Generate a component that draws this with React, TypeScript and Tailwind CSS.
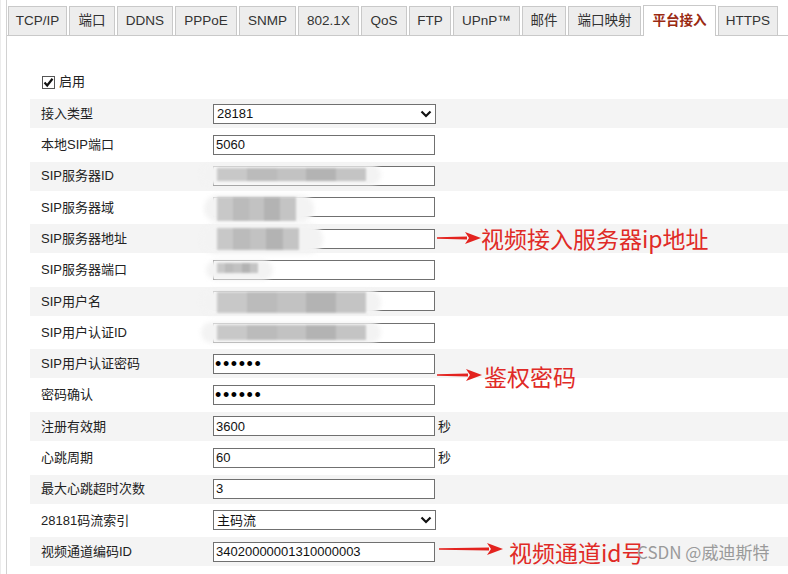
import React from "react";

const tabs = [
  { label: "TCP/IP", w: "w-[59px]" },
  { label: "端口", w: "w-[46px]" },
  { label: "DDNS", w: "w-[56px]" },
  { label: "PPPoE", w: "w-[62px]" },
  { label: "SNMP", w: "w-[57px]" },
  { label: "802.1X", w: "w-[61px]" },
  { label: "QoS", w: "w-[46px]" },
  { label: "FTP", w: "w-[42px]" },
  { label: "UPnP™", w: "w-[67px]" },
  { label: "邮件", w: "w-[44px]" },
  { label: "端口映射", w: "w-[73px]" },
  { label: "平台接入", w: "w-[73px]", active: true },
  { label: "HTTPS", w: "w-[60px]" },
];

type Row = {
  label: string;
  kind: "select" | "text" | "pass" | "blur";
  value?: string;
  unit?: string;
};

const rows: Row[] = [
  { label: "接入类型", kind: "select", value: "28181" },
  { label: "本地SIP端口", kind: "text", value: "5060" },
  { label: "SIP服务器ID", kind: "blur" },
  { label: "SIP服务器域", kind: "blur" },
  { label: "SIP服务器地址", kind: "blur" },
  { label: "SIP服务器端口", kind: "blur" },
  { label: "SIP用户名", kind: "blur" },
  { label: "SIP用户认证ID", kind: "blur" },
  { label: "SIP用户认证密码", kind: "pass" },
  { label: "密码确认", kind: "pass" },
  { label: "注册有效期", kind: "text", value: "3600", unit: "秒" },
  { label: "心跳周期", kind: "text", value: "60", unit: "秒" },
  { label: "最大心跳超时次数", kind: "text", value: "3" },
  { label: "28181码流索引", kind: "select", value: "主码流" },
  { label: "视频通道编码ID", kind: "text", value: "34020000001310000003" },
];

// mosaic blobs hiding private values: [blob x, y, w, h, bar x, y, w, h]
const blurs = [
  [200, 165, 180, 20, 216, 168, 149, 13],
  [203, 195, 110, 27, 216, 197, 79, 24],
  [200, 224, 122, 30, 216, 228, 82, 22],
  [205, 260, 67, 20, 216, 263, 41, 10],
  [200, 290, 180, 25, 216, 292, 149, 21],
  [200, 322, 180, 21, 216, 325, 149, 15],
];

function Chevron() {
  return (
    <svg width="12" height="8" viewBox="0 0 12 8" className="mr-[3px]">
      <polyline points="1.5,1.5 6,6 10.5,1.5" fill="none" stroke="#111" strokeWidth="2.2" />
    </svg>
  );
}

function Field({ row }: { row: Row }) {
  if (row.kind === "select") {
    return (
      <div className="w-[223px] h-[20px] border border-[#707070] bg-white flex items-center justify-between pl-[3px] text-[13px] text-[#111]">
        <span>{row.value}</span>
        <Chevron />
      </div>
    );
  }
  if (row.kind === "pass") {
    return (
      <div className="w-[222px] h-[20px] border border-[#707070] bg-white flex items-center pl-[1px] text-[18px] leading-[18px] tracking-[1.6px] text-black">
        ••••••
      </div>
    );
  }
  return (
    <div className="w-[222px] h-[20px] border border-[#707070] bg-white flex items-center pl-[2px] text-[13px] text-[#111]">
      {row.value}
    </div>
  );
}

function Arrow({ x, y, w }: { x: number; y: number; w: number }) {
  return (
    <svg
      className="absolute"
      style={{ left: x, top: y - 7 }}
      width={w}
      height="14"
      viewBox={`0 0 ${w} 14`}
    >
      <path d={`M0 6.2 L${w - 14} 5.5 L${w - 14} 8.5 L0 7.8 Z`} fill="#e3231f" />
      <path d={`M${w - 16} 1 L${w} 7 L${w - 16} 13 L${w - 12} 7 Z`} fill="#e3231f" />
    </svg>
  );
}

export default function App() {
  return (
    <div
      className="relative w-[788px] h-[574px] overflow-hidden bg-white border-l border-[#ececec] text-[#222]"
      style={{ fontFamily: '"Liberation Sans", "Noto Sans CJK SC", sans-serif' }}
    >
      <div className="ml-[5px] h-full border-l border-[#d2d2d2]">
        {/* Tabs */}
        <div className="flex items-end gap-[2px] h-[36px] pl-[1px] border-b border-[#c9c9c9]">
          {tabs.map((t) =>
            t.active ? (
              <div
                key={t.label}
                className={`${t.w} h-[31px] -mb-px bg-white border border-b-0 border-[#c9c9c9] flex items-center justify-center text-[13.5px] font-bold text-[#9a2a12]`}
              >
                {t.label}
              </div>
            ) : (
              <div
                key={t.label}
                className={`${t.w} h-[29px] bg-[#ededed] border border-b-0 border-[#c9c9c9] flex items-center justify-center text-[13.5px] text-[#333]`}
              >
                {t.label}
              </div>
            )
          )}
        </div>

        {/* Enable */}
        <div className="flex items-center gap-[4px] pl-[35px] pt-[39px] h-[53px] text-[13px]">
          <div className="w-[13px] h-[13px] border border-[#555] bg-white flex items-center justify-center">
            <svg width="11" height="11" viewBox="0 0 11 11">
              <polyline points="1.5,5.5 4.2,8.5 9.5,1.8" fill="none" stroke="#111" strokeWidth="2.2" />
            </svg>
          </div>
          <span>启用</span>
        </div>

        {/* Form rows */}
        <div className="ml-[23px] mt-[10px] flex flex-col gap-[2.3px]">
          {rows.map((r, i) => (
            <div
              key={r.label}
              className={`flex items-center h-[29px] pl-[11px] text-[13px] ${i % 2 === 0 ? "bg-[#f4f4f4]" : "bg-white"}`}
            >
              <div className="w-[172px] text-[#222]">{r.label}</div>
              {r.kind === "blur" ? (
                <Field row={{ ...r, kind: "text", value: "" }} />
              ) : (
                <Field row={r} />
              )}
              {r.unit && <span className="ml-[3px] text-[#222]">{r.unit}</span>}
            </div>
          ))}
        </div>
      </div>

      {/* Mosaic over private values */}
      {blurs.map((b, i) => (
        <div key={i}>
          <div
            className="absolute rounded-full bg-[#f3f3f3] blur-[2px]"
            style={{ left: b[0], top: b[1], width: b[2], height: b[3] }}
          />
          <div
            className="absolute flex blur-[1px] opacity-90"
            style={{ left: b[4], top: b[5], width: b[6], height: b[7] }}
          >
            <div className="flex-1 bg-[#c4c4c4]" />
            <div className="flex-1 bg-[#b5b5b5]" />
            <div className="flex-1 bg-[#bdbdbd]" />
            <div className="flex-1 bg-[#adadad]" />
            <div className="flex-1 bg-[#c0c0c0]" />
          </div>
        </div>
      ))}

      {/* Annotations */}
      <Arrow x={436} y={238} w={44} />
      <div className="absolute left-[480px] top-[224px] text-[23px] leading-[28px] text-[#e02a26]" style={{ fontFamily: '"Noto Sans CJK SC", sans-serif' }}>
        视频接入服务器ip地址
      </div>
      <Arrow x={436} y={375} w={45} />
      <div className="absolute left-[483px] top-[362px] text-[23px] leading-[28px] text-[#e02a26]" style={{ fontFamily: '"Noto Sans CJK SC", sans-serif' }}>
        鉴权密码
      </div>
      <Arrow x={438} y={549} w={64} />
      <div className="absolute left-[508px] top-[538px] text-[23px] leading-[28px] text-[#e02a26]" style={{ fontFamily: '"Noto Sans CJK SC", sans-serif' }}>
        视频通道id号
      </div>

      {/* Watermark */}
      <div className="absolute left-[636px] top-[540px] text-[17px] leading-[24px] text-[#9a9a9a]" style={{ fontFamily: '"Noto Sans CJK SC", sans-serif' }}>
        CSDN @威迪斯特
      </div>
    </div>
  );
}
